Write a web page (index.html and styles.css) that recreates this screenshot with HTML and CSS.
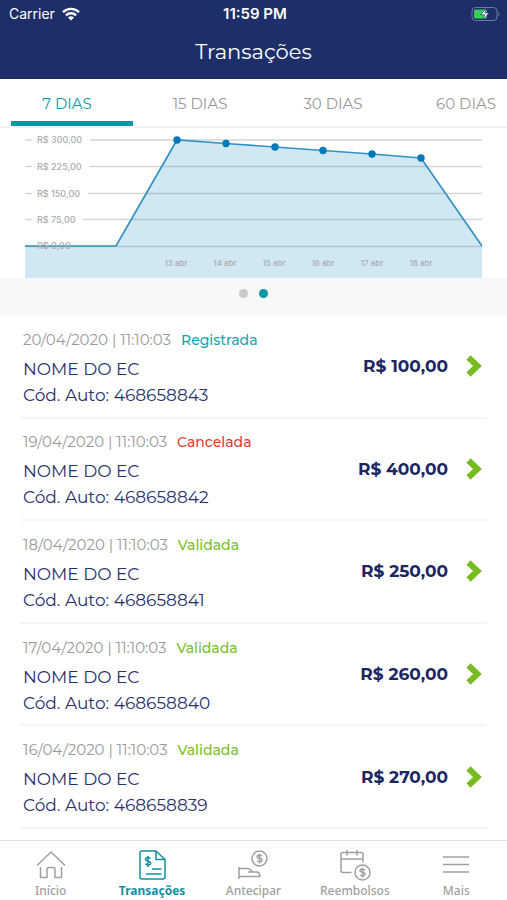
FILE: index.html
```html
<!DOCTYPE html>
<html lang="pt-BR">
<head>
<meta charset="utf-8">
<meta name="viewport" content="width=device-width, initial-scale=1">
<title>Transações</title>
<link rel="stylesheet" href="styles.css">
</head>
<body>
<div class="app">
  <header class="header">
    <div class="status">
      <span class="carrier">Carrier
        <svg width="18" height="14" viewBox="0 0 18 14" fill="none" stroke="#fff" stroke-width="2.4" aria-hidden="true"><path d="M1 5.2C5.500.8 12.500.8 17 5.200M3.900 8.300C6.700 5.600 11.300 5.600 14.100 8.300"/><path d="M9 13.500 6 10.400Q9 8.200 12 10.400Z" fill="#fff" stroke="none"/></svg>
      </span>
      <span class="clock">11:59 PM</span>
      <svg class="battery" width="30" height="16" viewBox="0 0 30 16" aria-hidden="true"><rect x="1" y="1.500" width="25" height="13" rx="3.500" fill="none" stroke="#6f7a9f"/><path d="M27.500 5.500q2 2.500 0 5z" fill="#6f7a9f"/><rect x="3" y="3.500" width="13" height="9" rx="1.500" fill="#34d058"/><path d="M15.500 2 9.500 8.700h4L12 14l6-7h-4z" fill="#fff" stroke="#1e2e69" stroke-width=".7"/></svg>
    </div>
    <h1>Transações</h1>
  </header>

  <nav class="tabs" aria-label="Período">
    <button class="tab active" type="button">7 DIAS</button>
    <button class="tab" type="button">15 DIAS</button>
    <button class="tab" type="button">30 DIAS</button>
    <button class="tab" type="button">60 DIAS</button>
  </nav>

  <section class="chart">
    <svg viewBox="0 0 457 150" role="img" aria-label="Transações por dia">
      <g stroke="#d5d6d8" stroke-width="1.500">
        <path d="M0 12h7M65 12h392M0 38.500h7M64 38.500h393M0 65.500h7M63 65.500h394M0 91.500h7M58 91.500h399M0 118.500h457"/>
      </g>
      <path d="M0 118H91L152 12 201 15.500 250 19 298 22.500 347 26 396 30 457 118V150H0Z" fill="#0079b8" fill-opacity=".18"/>
      <path d="M0 118H91L152 12 201 15.500 250 19 298 22.500 347 26 396 30 457 118" fill="none" stroke="#3391c3" stroke-width="1.700"/>
      <g fill="#0079b8"><circle cx="152" cy="12" r="3.700"/><circle cx="201" cy="15.500" r="3.700"/><circle cx="250" cy="19" r="3.700"/><circle cx="298" cy="22.500" r="3.700"/><circle cx="347" cy="26" r="3.700"/><circle cx="396" cy="30" r="3.700"/></g>
      <g class="axis"><text x="12" y="15">R$ 300,00</text><text x="12" y="42">R$ 225,00</text><text x="12" y="69">R$ 150,00</text><text x="12" y="95">R$ 75,00</text><text x="12" y="121">R$ 0,00</text></g>
      <g class="days"><text x="151" y="138">13 abr</text><text x="200" y="138">14 abr</text><text x="249" y="138">15 abr</text><text x="298" y="138">16 abr</text><text x="347" y="138">17 abr</text><text x="396" y="138">18 abr</text></g>
    </svg>
  </section>
  <div class="pager"><span class="dot"></span><span class="dot current"></span></div>

  <main class="list">
    <a class="row" href="#t1"><span class="info"><span class="meta">20/04/2020 | 11:10:03 <span class="state registered">Registrada</span></span><span class="line">NOME DO EC</span><span class="line">Cód. Auto: 468658843</span></span><strong class="amount">R$ 100,00</strong><svg class="chevron" viewBox="0 0 16 22" aria-hidden="true"><path d="M2.500 2.500 11.500 11 2.500 19.500"/></svg></a>
    <a class="row" href="#t2"><span class="info"><span class="meta">19/04/2020 | 11:10:03 <span class="state cancelled">Cancelada</span></span><span class="line">NOME DO EC</span><span class="line">Cód. Auto: 468658842</span></span><strong class="amount">R$ 400,00</strong><svg class="chevron" viewBox="0 0 16 22" aria-hidden="true"><path d="M2.500 2.500 11.500 11 2.500 19.500"/></svg></a>
    <a class="row" href="#t3"><span class="info"><span class="meta">18/04/2020 | 11:10:03 <span class="state valid">Validada</span></span><span class="line">NOME DO EC</span><span class="line">Cód. Auto: 468658841</span></span><strong class="amount">R$ 250,00</strong><svg class="chevron" viewBox="0 0 16 22" aria-hidden="true"><path d="M2.500 2.500 11.500 11 2.500 19.500"/></svg></a>
    <a class="row" href="#t4"><span class="info"><span class="meta">17/04/2020 | 11:10:03 <span class="state valid">Validada</span></span><span class="line">NOME DO EC</span><span class="line">Cód. Auto: 468658840</span></span><strong class="amount">R$ 260,00</strong><svg class="chevron" viewBox="0 0 16 22" aria-hidden="true"><path d="M2.500 2.500 11.500 11 2.500 19.500"/></svg></a>
    <a class="row" href="#t5"><span class="info"><span class="meta">16/04/2020 | 11:10:03 <span class="state valid">Validada</span></span><span class="line">NOME DO EC</span><span class="line">Cód. Auto: 468658839</span></span><strong class="amount">R$ 270,00</strong><svg class="chevron" viewBox="0 0 16 22" aria-hidden="true"><path d="M2.500 2.500 11.500 11 2.500 19.500"/></svg></a>
  </main>

  <nav class="bottom" aria-label="Principal">
    <a href="#inicio"><svg viewBox="0 0 32 32" aria-hidden="true"><path d="M2 16.500 16 3 30 16.500M5.500 18v10.500h6.500v-8q0-2 2-2h4q2 0 2 2v8h6.500V18"/></svg>Início</a>
    <a href="#transacoes" class="current"><svg viewBox="0 0 32 32" aria-hidden="true"><path d="M20 2H6Q4 2 4 4v24q0 2 2 2h21q2 0 2-2V10.500L20 2v8.500h9M16 20h9.500M10 25h15.500"/><path d="M14.500 9.500q-5-1.800-5 .8 0 1.400 2.600 1.900t2.600 2q0 2.800-5.400.8M12 7v11"/></svg>Transações</a>
    <a href="#antecipar"><svg viewBox="0 0 32 32" aria-hidden="true"><circle cx="22.500" cy="9.500" r="7.500"/><path d="M25 6.800q-5-1.500-5 .8 0 1.300 2.500 1.700t2.500 2q0 2.300-5.200.8M22.500 4.500v10M2 18v12M2 19.500h9q1.500 0 5 3.500M11 23h9q3 .5 3 4.500H2"/></svg>Antecipar</a>
    <a href="#reembolsos"><svg viewBox="0 0 32 32" aria-hidden="true"><path d="M12.500 23.500H4q-2 0-2-2V5.500q0-2 2-2h18q2 0 2 2v8M2 10h22M8 1v5.500M18 1v5.500"/><circle cx="23.500" cy="23.500" r="7.500"/><path d="M26 20.800q-5-1.500-5 .8 0 1.300 2.500 1.700t2.500 2q0 2.300-5.200.8M23.500 18.500v10"/></svg>Reembolsos</a>
    <a href="#mais"><svg viewBox="0 0 32 32" aria-hidden="true"><path d="M3 8h26M3 15.500h26M3 23h26"/></svg>Mais</a>
  </nav>
</div>
</body>
</html>
```
FILE: styles.css
```css
* { box-sizing: border-box; }
body { margin: 0; background: #fff; font-family: Montserrat, Inter, "Liberation Sans", sans-serif; }
.app { display: flex; flex-direction: column; min-height: 100vh; }
.header { height: 79px; background: #1e2e69; color: #fff; }
.status { display: grid; grid-template-columns: 1fr auto 1fr; align-items: center; height: 28px; padding: 0 6px 0 9px; font: 14px/20px Inter, sans-serif; }
.carrier { display: flex; align-items: center; gap: 7px; }
.clock { font-size: 15px; font-weight: 600; }
.battery { justify-self: end; }
h1 { margin: 0; text-align: center; font-size: 21px; font-weight: 400; line-height: 48px; }

.tabs { display: flex; height: 49px; overflow: hidden; border-bottom: 2px solid #f1f2f2; }
.tab { flex: 0 0 133px; padding: 2px 0 0 1px; border: 0; background: none; color: #999; font: inherit; font-size: 15px; }
.tab.active { color: #1398a7; background: linear-gradient(#0797a6, #0797a6) 11px 100% / 123px 5px no-repeat; }

.chart { padding: 0 25px; }
.chart svg { display: block; width: 100%; }
.axis, .days { font-family: Inter, sans-serif; font-size: 9px; font-weight: 500; fill: #a9abad; }
.days { font-size: 8px; text-anchor: middle; }
.pager { display: flex; justify-content: center; gap: 11px; height: 38px; padding-top: 11px; background: #f8f8f8; }
.dot { width: 9px; height: 9px; border-radius: 50%; background: #cacaca; }
.dot.current { background: #0797a6; }

.list { display: grid; flex: 1; grid-auto-rows: 1fr; padding: 0 20px 11px; }
.row { display: flex; align-items: center; padding: 0 5px 0 3px; border-bottom: 2px solid #f5f5f6; color: #27316c; text-decoration: none; }
.info { display: flex; flex: 1; flex-direction: column; padding-bottom: 1px; }
.meta { color: #999; font-size: 15px; line-height: 32px; }
.state { margin-left: 6px; font-size: 14px; font-weight: 500; }
.registered { color: #17a4b3; }
.cancelled { color: #e23b2e; }
.valid { color: #79bf2a; }
.line { font-size: 17px; line-height: 26px; }
.amount { font-size: 17px; font-weight: 700; color: #1b2763; }
.chevron { width: 16px; height: 22px; margin-left: 18px; overflow: visible; fill: none; stroke: #76bc21; stroke-width: 6; }

.bottom { display: grid; grid-template-columns: repeat(5, 1fr); height: 60px; border-top: 1px solid #e3e3e3; background: #fff; }
.bottom a { display: flex; flex-direction: column; align-items: center; padding-top: 8px; color: #a0a0a0; font: 500 12px/20px "Noto Sans", sans-serif; text-decoration: none; }
.bottom svg { width: 32px; height: 32px; fill: none; stroke: currentColor; stroke-width: 1.500; stroke-linejoin: round; }
.bottom .current { color: #1390a0; font-weight: 700; }
```
